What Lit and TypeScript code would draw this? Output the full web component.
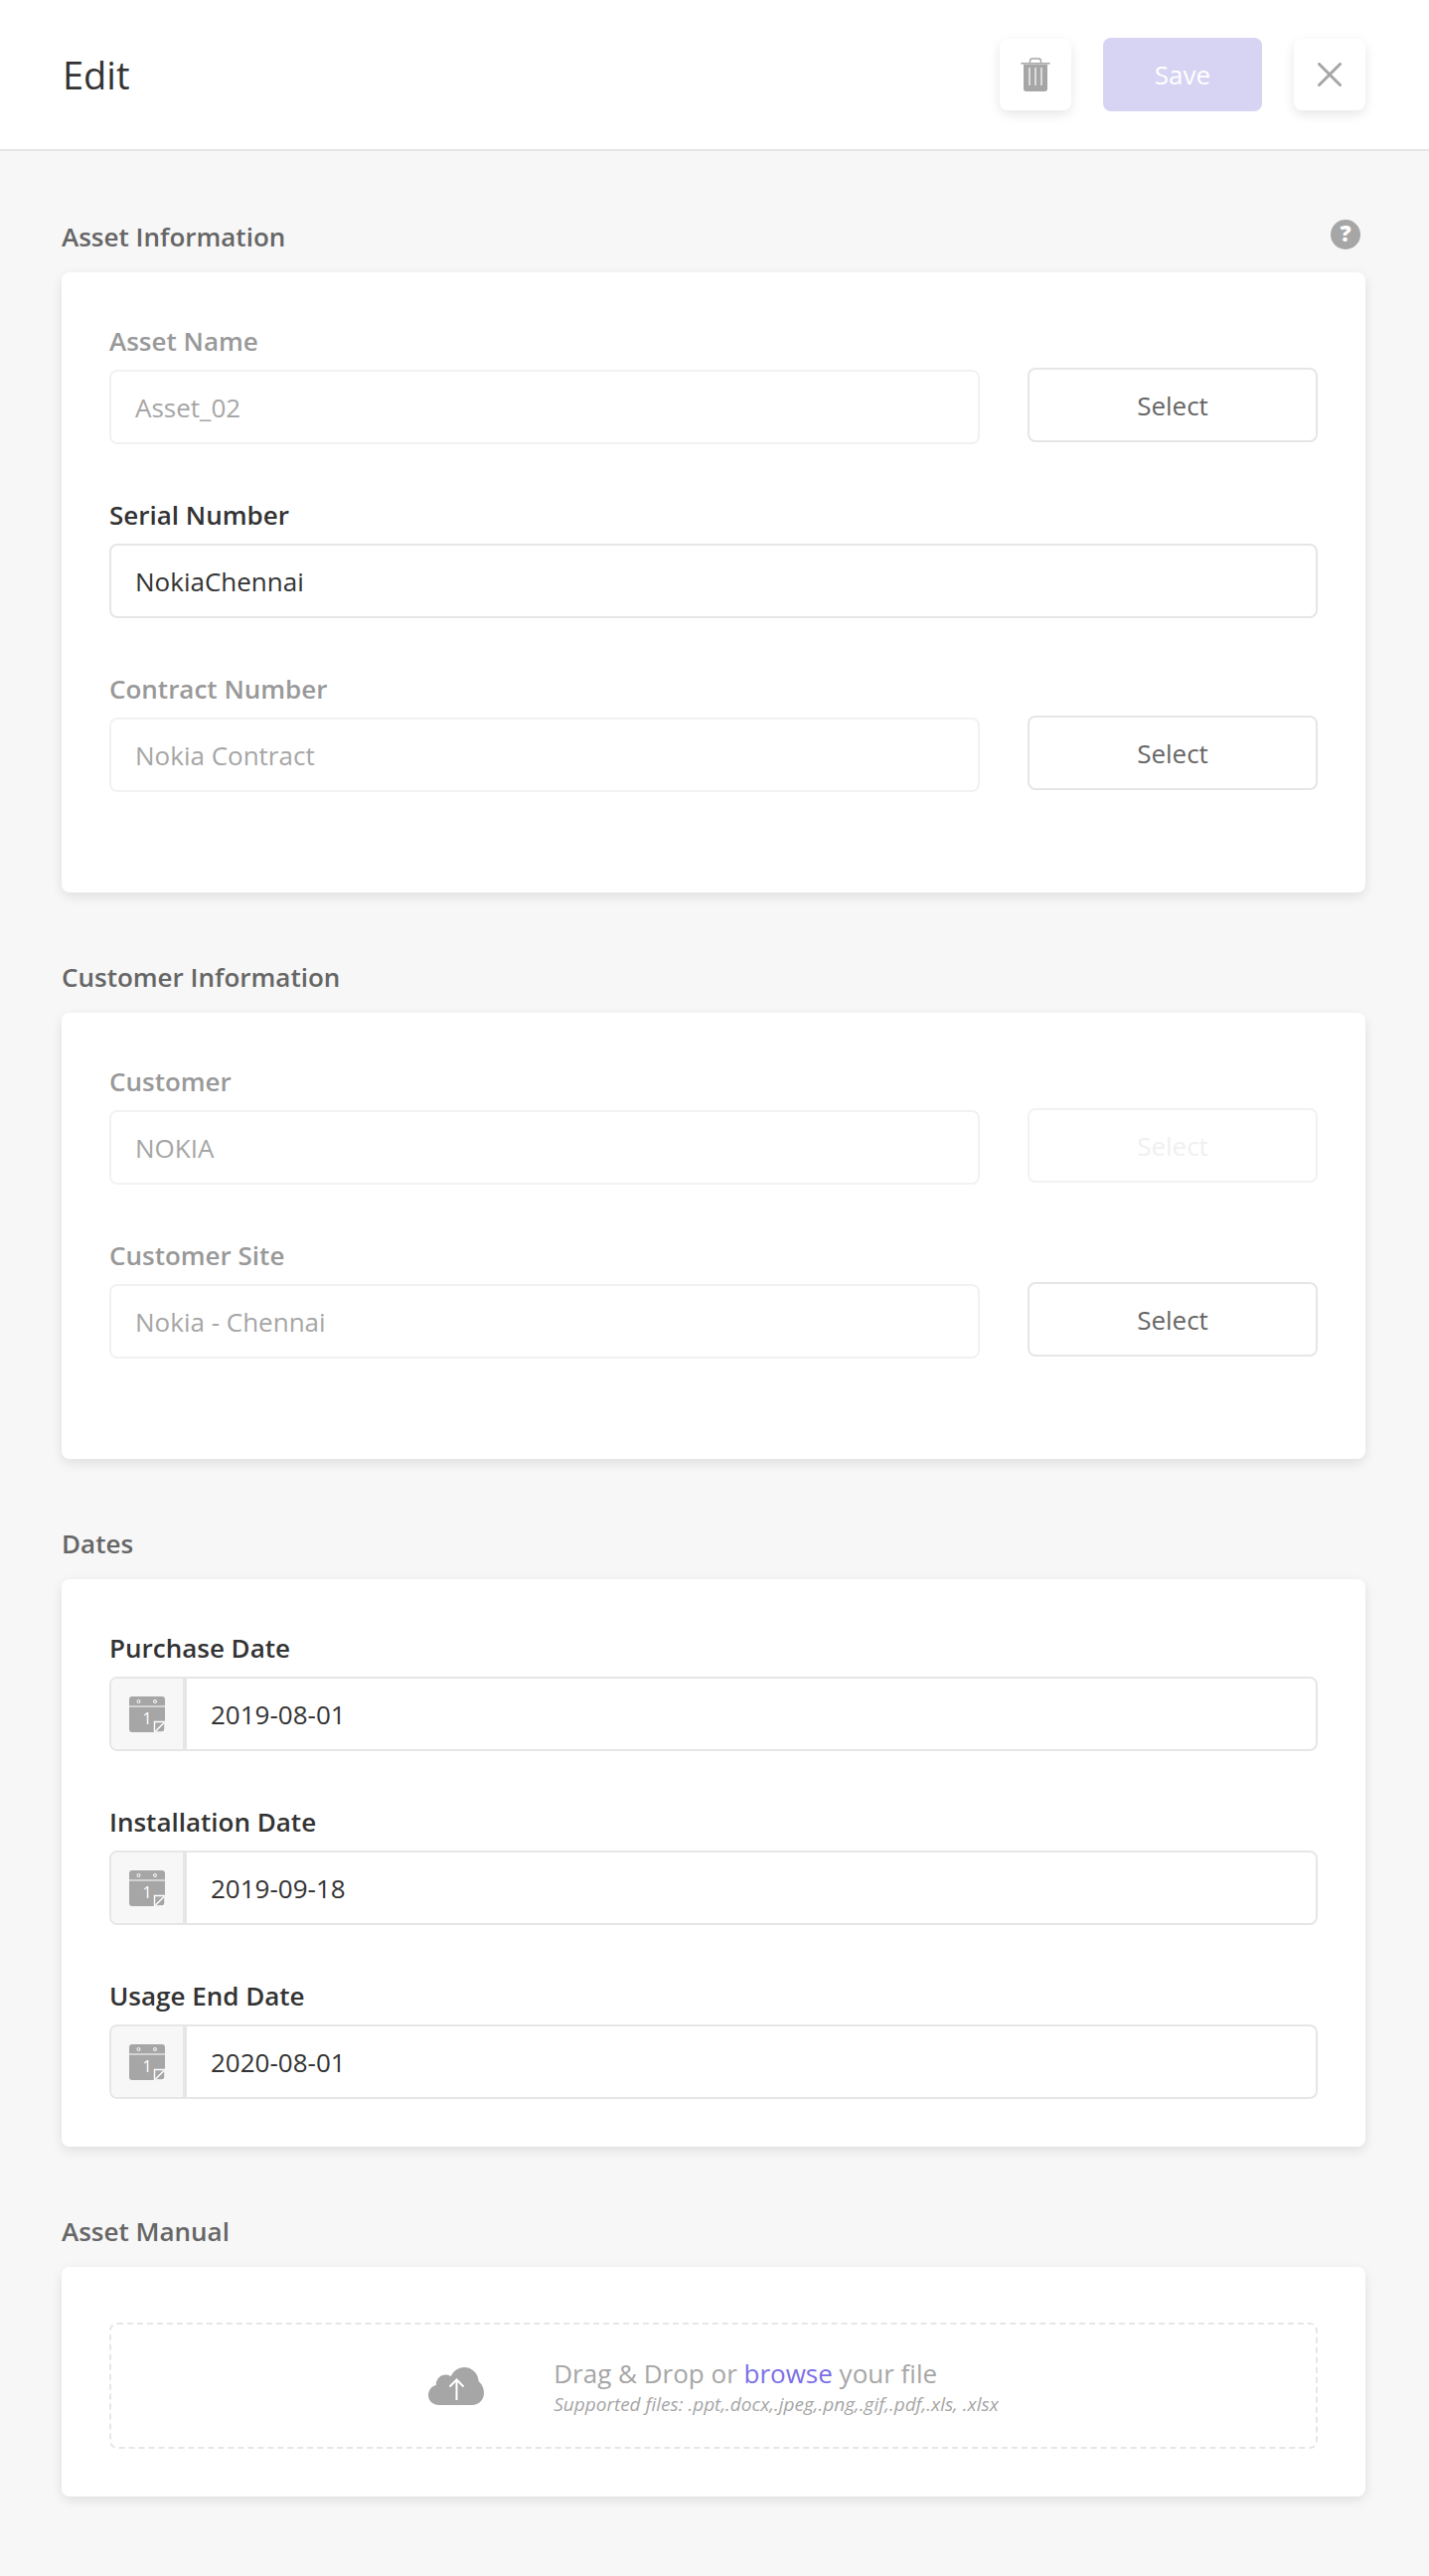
import { LitElement, html, css, nothing } from "lit";
import { customElement } from "lit/decorators.js";

const trashIcon = html`<svg width="30" height="34" viewBox="0 0 30 34">
  <path d="M9.5 5V3.2C9.5 1.9 10.4 1 11.7 1h6.6c1.3 0 2.2.9 2.2 2.2V5" fill="none" stroke="#a6a6a6" stroke-width="1.4" />
  <rect x="0.5" y="5" width="29" height="1.6" fill="#a6a6a6" />
  <path d="M3 7h24v24.5c0 1.4-1.1 2.5-2.5 2.5h-19C4.1 34 3 32.900 3 31.500z" fill="#a6a6a6" />
  <path d="M9 10v18M15 10v18M21 10v18" stroke="#fff" stroke-width="1.2" />
</svg>`;

const closeIcon = html`<svg width="24" height="24" viewBox="0 0 24 24">
  <path d="M1.500 1.500l21 21M22.500 1.500l-21 21" stroke="#a6a6a6" stroke-width="3" stroke-linecap="round" />
</svg>`;

const helpIcon = html`<svg width="30" height="30" viewBox="0 0 30 30">
  <circle cx="15" cy="15" r="15" fill="#a6a6a6" />
  <text x="15" y="22" text-anchor="middle" class="help-mark">?</text>
</svg>`;

const calendarIcon = html`<svg width="36" height="36" viewBox="0 0 36 36">
  <path d="M3 0h30a3 3 0 0 1 3 3v22.500L25.500 36H3a3 3 0 0 1-3-3V3a3 3 0 0 1 3-3z" fill="#a6a6a6" />
  <rect x="0" y="9.500" width="36" height="1" fill="#fff" />
  <circle cx="9.500" cy="5" r="1.500" fill="none" stroke="#fff" />
  <circle cx="26" cy="5" r="1.500" fill="none" stroke="#fff" />
  <text x="18" y="28" text-anchor="middle" class="cal-day">1</text>
  <path d="M25.500 25.500H36V33a3 3 0 0 1-3 3h-7.500z" fill="#a6a6a6" stroke="#fff" stroke-width="1.400" />
  <path d="M26.500 35L35 26.500" stroke="#fff" stroke-width="1.400" />
</svg>`;

const cloudIcon = html`<svg width="56" height="38" viewBox="0 0 56 38">
  <path d="M11 38C4.500 38 0 33.800 0 28c0-5 3.300-9 7.800-10C7.700 12 12 7.500 17.500 7.500c2 0 3.800.6 5.300 1.600C25.200 3.600 30.400 0 36 0c8 0 14.500 6.300 14.700 14.300C53.900 16.700 56 21.200 56 26c0 6.800-5.300 12-12 12z" fill="#a6a6a6" />
  <path d="M28.500 33V12.500M21.500 19.500l7-7 7 7" fill="none" stroke="#fff" stroke-width="2" />
</svg>`;

type Field = {
  label: string;
  value: string;
  disabled?: boolean;
  select?: "on" | "off";
};

const assetFields: Field[] = [
  { label: "Asset Name", value: "Asset_02", disabled: true, select: "on" },
  { label: "Serial Number", value: "NokiaChennai" },
  { label: "Contract Number", value: "Nokia Contract", disabled: true, select: "on" },
];

const customerFields: Field[] = [
  { label: "Customer", value: "NOKIA", disabled: true, select: "off" },
  { label: "Customer Site", value: "Nokia - Chennai", disabled: true, select: "on" },
];

const dateFields: Field[] = [
  { label: "Purchase Date", value: "2019-08-01" },
  { label: "Installation Date", value: "2019-09-18" },
  { label: "Usage End Date", value: "2020-08-01" },
];

@customElement("app-root")
export class AppRoot extends LitElement {
  static styles = css`
    :host {
      display: block;
      min-height: 2592px;
      background: #f7f7f7;
      font-family: "Open Sans", "Liberation Sans", sans-serif;
      color: #333;
    }

    .header {
      height: 150px;
      background: #fff;
      border-bottom: 2px solid #e6e6e6;
      padding: 0 64px 0 63px;
      display: flex;
      align-items: center;
      justify-content: space-between;
    }

    .title {
      font-size: 38px;
      line-height: 50px;
      margin-top: 0;
    }

    .actions {
      display: flex;
      align-items: center;
      gap: 32px;
      margin-top: -1px;
    }

    .icon-btn {
      width: 72px;
      height: 72px;
      border-radius: 8px;
      background: #fff;
      box-shadow: 0 4px 12px rgba(0, 0, 0, 0.1);
      display: flex;
      align-items: center;
      justify-content: center;
    }

    .save {
      width: 160px;
      height: 74px;
      border-radius: 8px;
      background: #d7d3f3;
      color: #fff;
      font-size: 26px;
      display: flex;
      align-items: center;
      justify-content: center;
    }

    .main {
      padding: 68px 64px 0 62px;
    }

    .section {
      margin-bottom: 67px;
    }

    .section-head {
      height: 36px;
      margin-bottom: 18px;
      display: flex;
      align-items: center;
      justify-content: space-between;
      font-size: 26px;
      font-weight: 600;
      color: #666;
    }

    .section-head svg {
      margin-right: 5px;
      margin-top: -4px;
    }

    .help-mark {
      font-family: "Open Sans", sans-serif;
      font-size: 22px;
      font-weight: 800;
      fill: #fff;
    }

    .cal-day {
      font-family: "Open Sans", sans-serif;
      font-size: 16px;
      fill: #fff;
    }

    .card {
      background: #fff;
      border-radius: 8px;
      padding: 51px 48px 48px;
      box-shadow: 0 4px 12px rgba(0, 0, 0, 0.1);
    }

    .field {
      margin-bottom: 53px;
    }

    .field.last {
      margin-bottom: 0;
    }

    .label {
      height: 36px;
      line-height: 36px;
      margin-bottom: 11px;
      font-size: 26px;
      font-weight: 600;
      color: #333;
    }

    .label.off {
      color: #999;
    }

    .row {
      display: flex;
      gap: 48px;
      margin-bottom: 3px;
    }

    .input {
      flex: 1;
      height: 75px;
      box-sizing: border-box;
      border: 2px solid #e6e6e6;
      border-radius: 8px;
      padding: 0 24px;
      display: flex;
      align-items: center;
      font-size: 26px;
      color: #333;
      background: #fff;
    }

    .input.off {
      border-color: #f2f2f2;
      color: #a6a6a6;
    }

    .select {
      width: 292px;
      height: 75px;
      margin-top: -2px;
      box-sizing: border-box;
      border: 2px solid #e6e6e6;
      border-radius: 8px;
      display: flex;
      align-items: center;
      justify-content: center;
      font-size: 26px;
      color: #666;
    }

    .select.off {
      border-color: #f2f2f2;
      color: #f0f0f0;
    }

    .date {
      height: 75px;
      box-sizing: border-box;
      border: 2px solid #e6e6e6;
      border-radius: 8px;
      display: flex;
      align-items: stretch;
      font-size: 26px;
      color: #333;
      overflow: hidden;
    }

    .date-addon {
      width: 72px;
      background: #f7f7f7;
      border-right: 4px solid #e6e6e6;
      display: flex;
      align-items: center;
      justify-content: center;
    }

    .date-value {
      padding-left: 24px;
      display: flex;
      align-items: center;
    }

    .drop {
      height: 127px;
      box-sizing: border-box;
      border: 2px dashed #e6e6e6;
      border-radius: 8px;
      display: flex;
      align-items: center;
      justify-content: center;
      gap: 70px;
    }

    .card.manual {
      padding: 56px 48px 48px;
    }

    .drop-main {
      font-size: 26px;
      line-height: 36px;
      color: #a6a6a6;
    }

    .drop-main a {
      color: #7b6fe8;
    }

    .drop-sub {
      font-size: 19px;
      line-height: 26px;
      font-style: italic;
      color: #a6a6a6;
    }
  `;

  private renderField(field: Field, last: boolean) {
    const off = field.disabled ? "off" : "";
    return html`<div class="field ${last ? "last" : ""}">
      <div class="label ${off}">${field.label}</div>
      <div class="row">
        <div class="input ${off}">${field.value}</div>
        ${field.select
          ? html`<div class="select ${field.select === "off" ? "off" : ""}">Select</div>`
          : nothing}
      </div>
    </div>`;
  }

  private renderDate(field: Field, last: boolean) {
    return html`<div class="field ${last ? "last" : ""}">
      <div class="label">${field.label}</div>
      <div class="date">
        <div class="date-addon">${calendarIcon}</div>
        <div class="date-value">${field.value}</div>
      </div>
    </div>`;
  }

  render() {
    return html`
      <div class="header">
        <div class="title">Edit</div>
        <div class="actions">
          <div class="icon-btn">${trashIcon}</div>
          <div class="save">Save</div>
          <div class="icon-btn">${closeIcon}</div>
        </div>
      </div>
      <div class="main">
        <div class="section">
          <div class="section-head"><span>Asset Information</span>${helpIcon}</div>
          <div class="card">${assetFields.map((f) => this.renderField(f, false))}</div>
        </div>
        <div class="section">
          <div class="section-head"><span>Customer Information</span></div>
          <div class="card">${customerFields.map((f) => this.renderField(f, false))}</div>
        </div>
        <div class="section">
          <div class="section-head"><span>Dates</span></div>
          <div class="card">
            ${dateFields.map((f, i) => this.renderDate(f, i === dateFields.length - 1))}
          </div>
        </div>
        <div class="section">
          <div class="section-head"><span>Asset Manual</span></div>
          <div class="card manual">
            <div class="drop">
              ${cloudIcon}
              <div>
                <div class="drop-main">Drag &amp; Drop or <a>browse</a> your file</div>
                <div class="drop-sub">Supported files: .ppt,.docx,.jpeg,.png,.gif,.pdf,.xls, .xlsx</div>
              </div>
            </div>
          </div>
        </div>
      </div>
    `;
  }
}
